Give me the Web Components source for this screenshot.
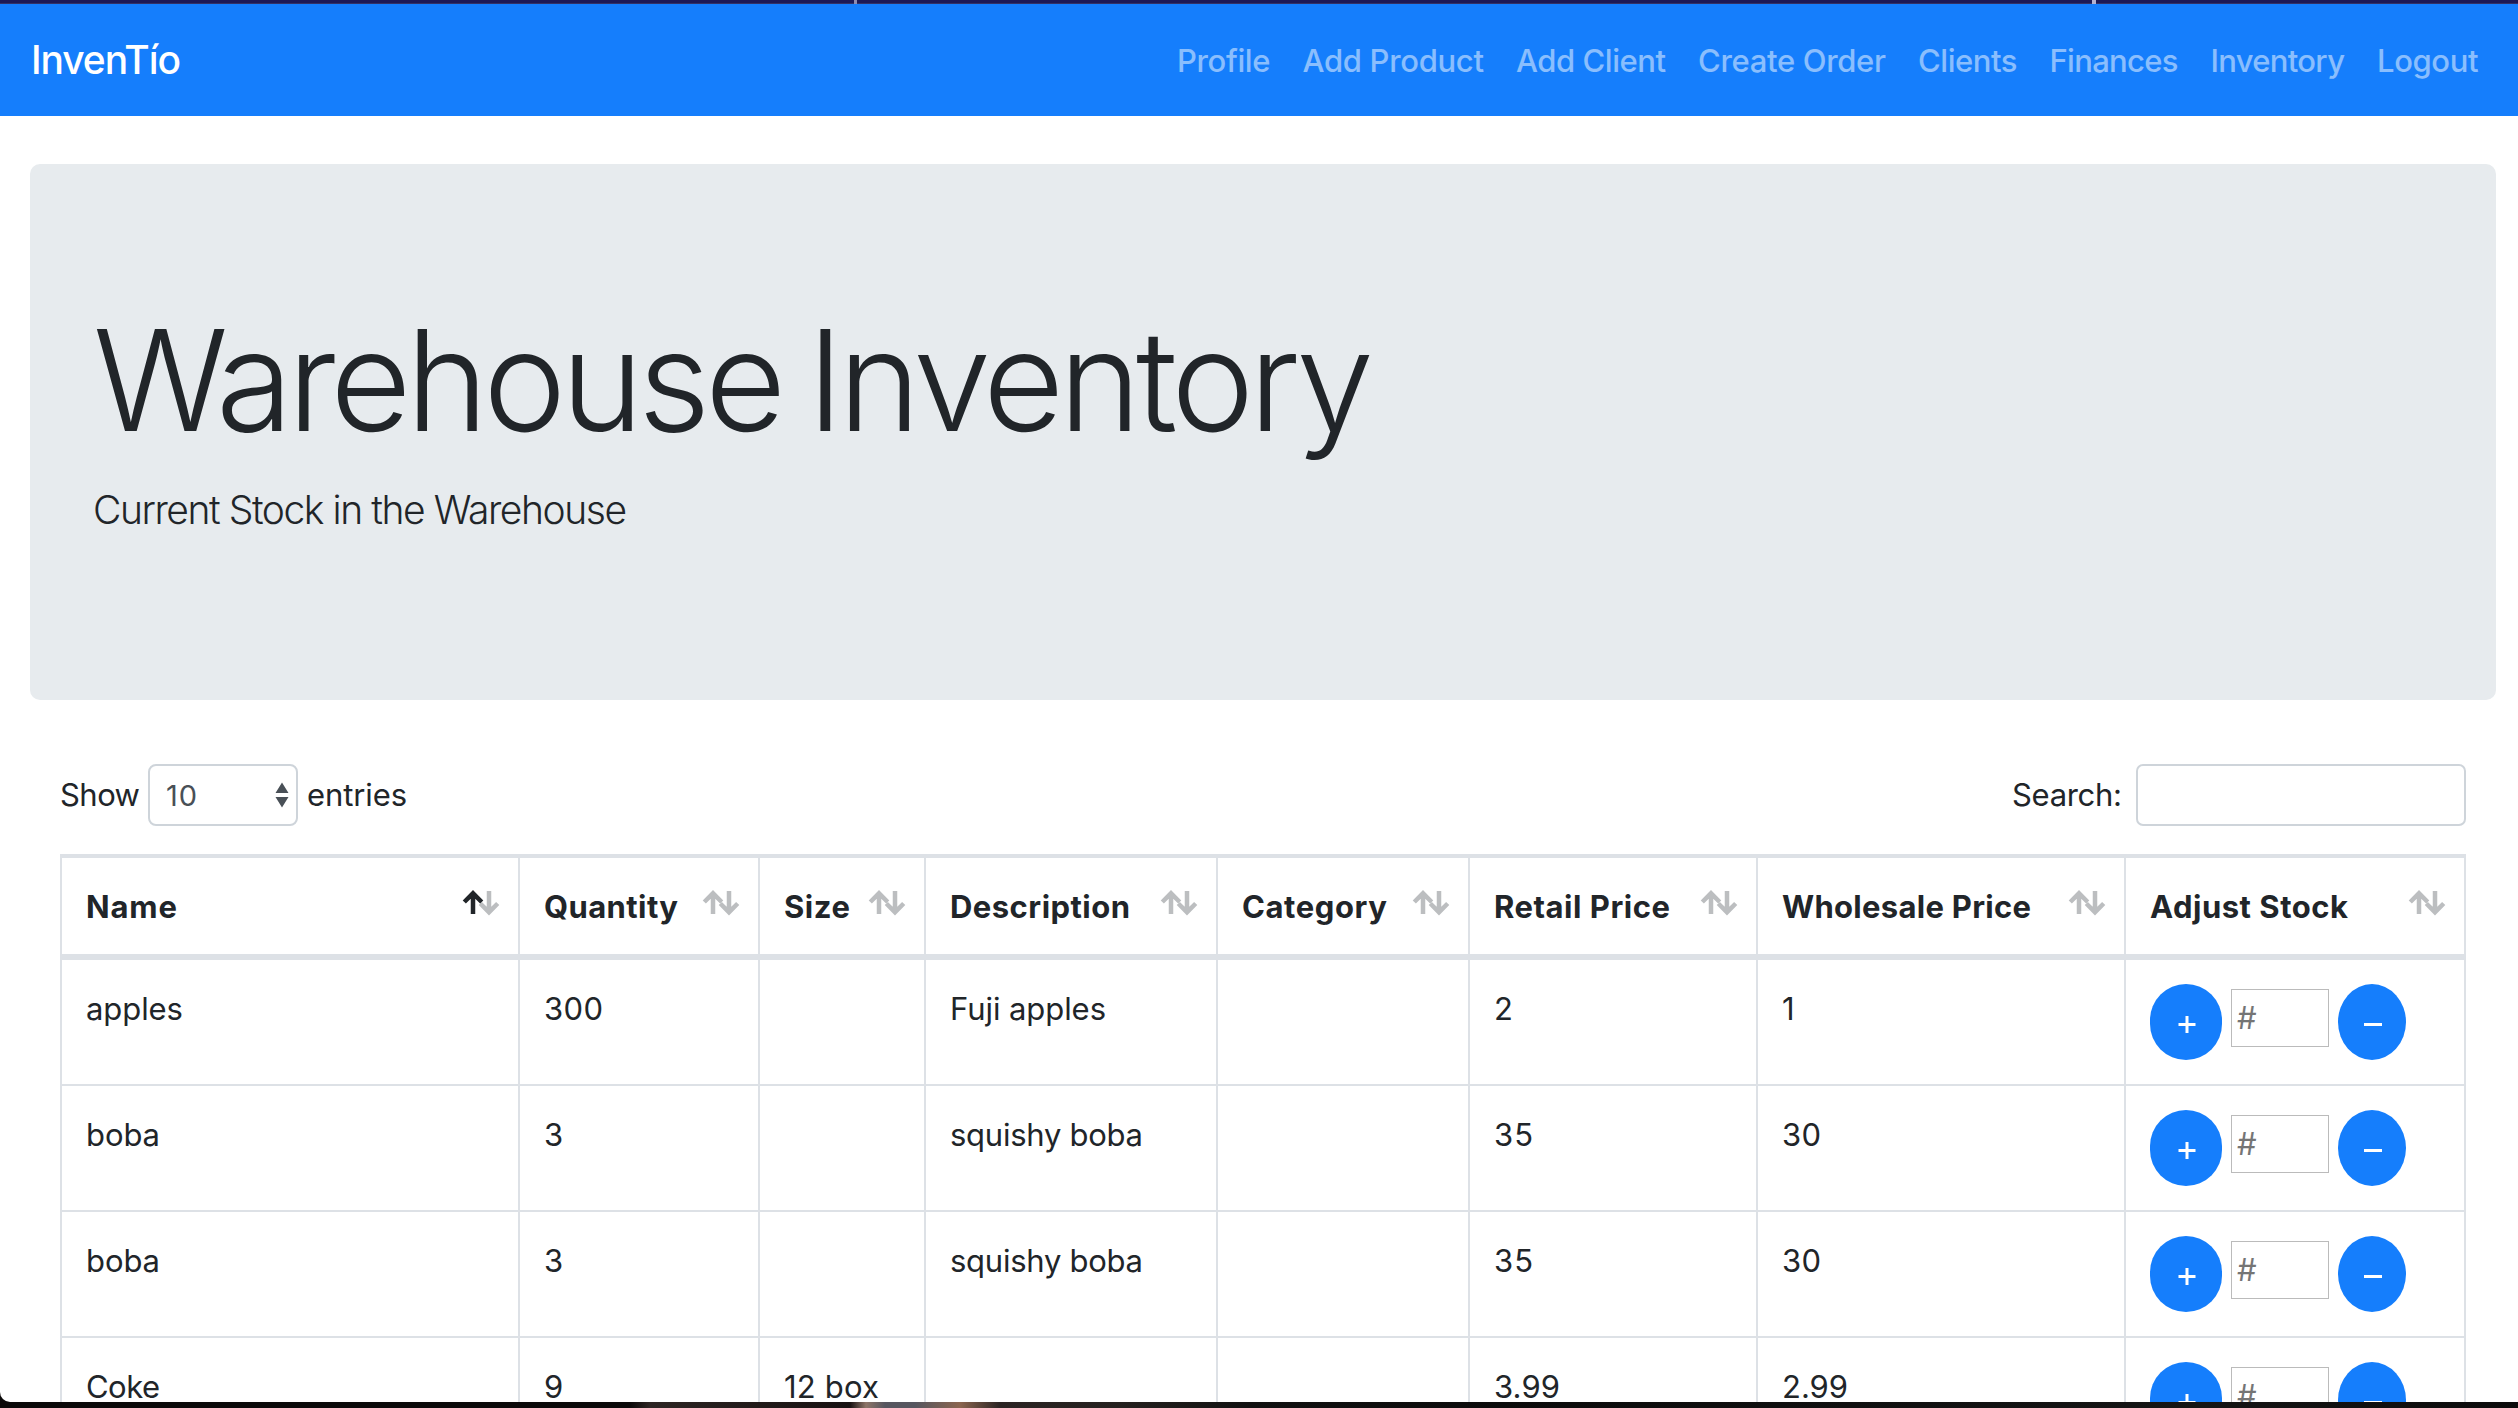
<!DOCTYPE html>
<html lang="en">
<head>
<meta charset="utf-8">
<title>InvenTío</title>
<style>
html,body{margin:0;height:100%;overflow:hidden}
body{background:#0b0909;color:#212529;font-family:Inter,"Liberation Sans",sans-serif;font-size:31px;line-height:48px;font-weight:440;font-optical-sizing:none}
</style>
</head>
<body>
<app-window></app-window>
<script>
const mount = (el, html) => { const r = el.attachShadow({mode:'open'}); r.innerHTML = html; return r; };

/* Text set to a fixed measure by tracking. */
class FitText extends HTMLElement {
  connectedCallback() {
    if (this.shadowRoot) return;
    const r = mount(this, `<style>:host{display:inline-block;white-space:pre;flex:none}span{display:inline-block}</style><span><slot></slot></span>`);
    const s = r.querySelector('span'), w = +this.getAttribute('w'), n = this.textContent.length;
    const natural = s.getBoundingClientRect().width;
    if (n > 1) s.style.letterSpacing = ((w - natural) / (n - 1)) + 'px';
    this.style.width = w + 'px';
  }
}
customElements.define('fit-text', FitText);

class NavBar extends HTMLElement {
  connectedCallback() {
    const links = [['Profile',93.5],['Add Product',181.5],['Add Client',150],['Create Order',188],['Clients',99.5],['Finances',129],['Inventory',134.500],['Logout',101.500]];
    mount(this, `<style>
      :host{display:flex;justify-content:space-between;align-items:center;height:112px;box-sizing:border-box;padding:0 39.5px 0 31px;background:#157efc;color:#fff}
      .brand{font-size:39px;line-height:60px;color:#fff;font-weight:450}
      nav{display:flex;gap:32px;color:rgba(255,255,255,.5);padding-top:2px;font-weight:470}
    </style><div class="brand"><fit-text w="150">InvenTío</fit-text></div>
    <nav>${links.map(([t,w])=>`<fit-text w="${w}">${t}</fit-text>`).join('')}</nav>`);
  }
}
customElements.define('nav-bar', NavBar);

class HeroBanner extends HTMLElement {
  connectedCallback() {
    mount(this, `<style>
      :host{display:block;height:536px;box-sizing:border-box;margin:48px 22px 0 30px;padding:129px 64px 0 63px;background:#e7ebee;border-radius:10px;font-weight:330;font-optical-sizing:auto}
      h1{margin:0 0 13px;font-size:140px;line-height:174px;font-weight:330;word-spacing:-8px}
      p{margin:0;font-size:39px;line-height:60px}
    </style><h1><fit-text w="1281">Warehouse Inventory</fit-text></h1><p><fit-text w="534">Current Stock in the Warehouse</fit-text></p>`);
  }
}
customElements.define('hero-banner', HeroBanner);

class TableTools extends HTMLElement {
  connectedCallback() {
    mount(this, `<style>
      :host{display:flex;align-items:center;margin:64px 52px 0 60px;height:62px}
      .select{box-sizing:border-box;width:150px;height:62px;border:2px solid #ced4da;border-radius:8px;margin:0 9px 0 8px;padding:2px 7px 0 16px;display:flex;align-items:center;justify-content:space-between;font-size:29px;color:#495057;background:#fff}
      .select svg{display:block;margin-top:-2px}
      .grow{flex:1}
      .search{box-sizing:border-box;width:330px;height:62px;border:2px solid #ced4da;border-radius:7px;margin-left:14px;background:#fff}
    </style><fit-text w="80">Show</fit-text>
    <div class="select"><fit-text w="31">10</fit-text><svg width="14" height="26" viewBox="0 0 14 26"><path fill="#495057" d="M7 0.500l6.500 10.500H.5zM7 25.500l6.500-10.500H.5z"/></svg></div>
    <fit-text w="100">entries</fit-text><span class="grow"></span><fit-text w="110">Search:</fit-text><div class="search"></div>`);
  }
}
customElements.define('table-tools', TableTools);

class SortArrows extends HTMLElement {
  connectedCallback() {
    const active = this.hasAttribute('asc');
    mount(this, `<style>:host{display:block;flex:none;width:38px;height:26px}svg{display:block}</style>
    <svg width="38" height="26" viewBox="0 0 38 26" fill="none" stroke-width="4.500">
      <path stroke="#bcbec0" d="M27 1v22M18.300 13.500L27 22.200 35.700 13.500"/>
      <path stroke="${active ? '#212529' : '#bcbec0'}" d="M11 24V3M2.300 12L11 3.300 19.700 12"/>
    </svg>`);
  }
}
customElements.define('sort-arrows', SortArrows);

class StockAdjuster extends HTMLElement {
  connectedCallback() {
    mount(this, `<style>
      :host{display:flex;align-items:flex-start;height:76px}
      button{all:unset;box-sizing:border-box;width:72px;height:76px;border-radius:36px;background:#157efc;display:flex;align-items:center;justify-content:center}
      button.less{width:68px;border-radius:34px / 38px}
      svg{display:block;margin:4px 0 0 1px}
      .qty{box-sizing:border-box;width:98px;height:58px;margin:5px 9px 0;border:1px solid #bbb;background:#fff;color:#757575;padding:4px 0 0 5px}
    </style>
    <button aria-label="add"><svg width="18" height="18" viewBox="0 0 18 18"><path stroke="#fff" stroke-width="3" d="M0.500 9.500h17M9 1v17"/></svg></button>
    <div class="qty"><fit-text w="20">#</fit-text></div>
    <button class="less" aria-label="remove"><svg width="18" height="18" viewBox="0 0 18 18"><path stroke="#fff" stroke-width="3" d="M0 9.500h18"/></svg></button>`);
  }
}
customElements.define('stock-adjuster', StockAdjuster);

class InventoryTable extends HTMLElement {
  connectedCallback() {
    const heads = [['Name',91],['Quantity',134],['Size',66],['Description',180],['Category',145],['Retail Price',176],['Wholesale Price',249],['Adjust Stock',198]];
    const rows = [
      [['apples',97],['300',59],null,['Fuji apples',156],null,['2',20],['1',14]],
      [['boba',74],['3',20],null,['squishy boba',193],null,['35',39],['30',39]],
      [['boba',74],['3',20],null,['squishy boba',193],null,['35',39],['30',39]],
      [['Coke',74],['9',20],['12 box',95],null,null,['3.99',66],['2.99',66]]
    ];
    const fit = c => c ? `<fit-text w="${c[1]}">${c[0]}</fit-text>` : '';
    mount(this, `<style>
      :host{display:block;margin:28px 52px 0 60px;width:2406px;box-sizing:border-box;border-left:2px solid #dde1e6}
      .row{display:grid;grid-template-columns:458px 240px 166px 292px 252px 288px 368px 340px;height:126px;box-sizing:border-box;border-bottom:2px solid #dde1e6}
      .row>div{box-sizing:border-box;border-right:2px solid #dde1e6;padding:25px 22px 0 24px}
      .row>div:last-child{padding-top:24px}
      .head{height:106px;border-top:4px solid #dde1e6;border-bottom:6px solid #dde1e6;font-weight:700}
      .head>div,.head>div:last-child{display:flex;justify-content:space-between;align-items:flex-start;padding:25px 18px 0 24px}
      sort-arrows{margin-top:7px}
    </style>
    <div class="row head">${heads.map((h,i)=>`<div>${fit(h)}<sort-arrows${i?'':' asc'}></sort-arrows></div>`).join('')}</div>
    ${rows.map(r=>`<div class="row">${r.map(c=>`<div>${fit(c)}</div>`).join('')}<div><stock-adjuster></stock-adjuster></div></div>`).join('')}`);
  }
}
customElements.define('inventory-table', InventoryTable);

class AppWindow extends HTMLElement {
  connectedCallback() {
    mount(this, `<style>
      :host{display:block;height:1408px;overflow:hidden}
      .top{height:4px;background:linear-gradient(90deg,transparent 0 854px,#8f8bb0 854px 857px,transparent 857px 2092px,#b5b2cf 2092px 2096px,transparent 2096px),linear-gradient(#1d1956 0 3px,#333166 3px)}
      .page{height:1398px;overflow:hidden;background:#fff;border-bottom-left-radius:10px}
      .desk{height:6px;background:linear-gradient(90deg,#0b0909 0 630px,#2d2523 650px,#171111 850px,#8d7568 866px,#56565f 885px,#56565f 915px,#8b654f 960px,#2b2423 1000px,#25211f 1120px,#111 1250px,#0b0b0b 1500px,#151515 2200px,#0b0b0b)}
    </style><div class="top"></div>
    <div class="page"><nav-bar></nav-bar><hero-banner></hero-banner><table-tools></table-tools><inventory-table></inventory-table></div>
    <div class="desk"></div>`);
  }
}
customElements.define('app-window', AppWindow);
</script>
</body>
</html>
